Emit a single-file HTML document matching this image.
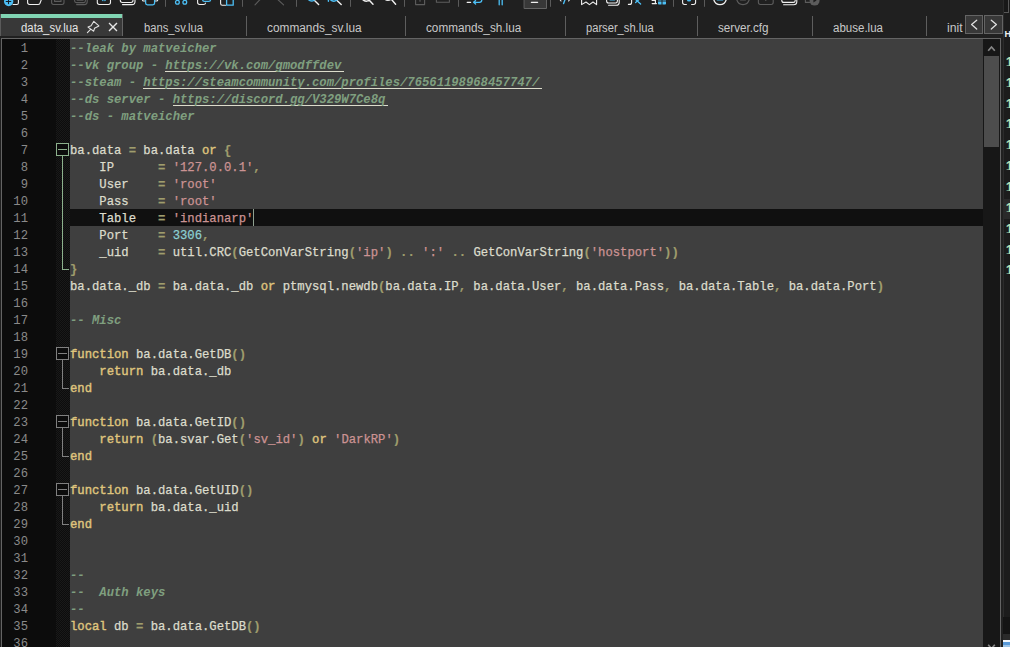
<!DOCTYPE html>
<html lang="en">
<head>
<meta charset="utf-8">
<title>data_sv.lua - Notepad++</title>
<style>
*{box-sizing:border-box}
html,body{margin:0;padding:0}
body{width:1010px;height:647px;overflow:hidden;background:#202020;position:relative;font-family:"Liberation Sans",sans-serif}
.abs{position:absolute}
#toolbar{position:absolute;left:0;top:0;width:1010px;height:14px;background:#202020;overflow:hidden}
#tabs{position:absolute;left:0;top:14px;width:1003px;height:24px;background:#202020;overflow:hidden}
.tl{position:absolute;top:7px;height:14px;color:#c8c8c8;font-size:12.3px;line-height:14px;white-space:nowrap;transform-origin:0 0}
.tl.on{color:#e4e4e4}
#atab{position:absolute;left:1px;top:0;width:121px;height:22px;background:#383838}
#atab:before{content:"";position:absolute;left:0;top:0;width:121px;height:4px;background:#80d4b2}
#atab:after{content:"";position:absolute;left:121px;top:0;width:1px;height:22px;background:#646464}
.sep{position:absolute;top:2px;width:1px;height:20px;background:#5e5e5e}
.ico{position:absolute;overflow:visible}
#editor{position:absolute;left:1px;top:38px;width:1000px;height:609px;border:1px solid #646464;border-bottom:0;background:#3f3f3f;overflow:hidden}
#lnm{position:absolute;left:0;top:0;width:54px;height:609px;background:#0c0c0c}
#fold{position:absolute;left:54px;top:0;width:14px;height:609px;background-color:#0c0c0c;background-image:conic-gradient(#191919 25%,#0c0c0c 0 50%,#191919 0 75%,#0c0c0c 0);background-size:2px 2px}
#code{position:absolute;left:68px;top:0;width:913px;height:609px;background:#3f3f3f}
.ln,.cl{position:absolute;height:17px;line-height:17px;font-family:"Liberation Mono","DejaVu Sans Mono",monospace;font-size:12.222px;white-space:pre}
.ln{left:0;width:26px;text-align:right;color:#8a8a8a;font-size:12.2px}
.cl{left:0;color:#dcdccc;-webkit-text-stroke:0.25px}
.cl .c{-webkit-text-stroke:0}
.cl .k{-webkit-text-stroke:0.42px}
.cl .o{-webkit-text-stroke:0.2px}
.cur{position:absolute;left:0;width:913px;height:17px;background:#101010}
.fg{color:#808080}
.fg.hl{color:#8cb08c}
.fb{position:absolute;left:0;width:13px;height:13px;border:1px solid currentColor;background:#0c0c0c}
.fb:after{content:"";position:absolute;left:1px;top:5px;width:9px;height:1px;background:currentColor}
.fv{position:absolute;left:6px;width:1px;background:currentColor}
.fh{position:absolute;left:6px;width:7px;height:1px;background:currentColor}
#caret{position:absolute;width:1px;height:17px;background:#8fa08f}
.c{color:#7f9f7f;font-style:italic;font-weight:bold}
.u{background:linear-gradient(#dcdccc,#dcdccc) no-repeat 0 12px/100% 1px;padding:0 3px 2px 0;margin-right:-3px}
.k{color:#dfc47d;font-weight:normal}
.o{color:#9f9d6d;font-weight:bold}
.s{color:#cc9393}
.n{color:#8cd0d3}
#vsb{position:absolute;left:981px;top:0;width:17px;height:609px;background:#171717}
#thumb{position:absolute;left:1px;top:17px;width:15px;height:91px;background:#4d4d4d}
#right{position:absolute;left:1003px;top:0;width:7px;height:647px;background:#1c1c1c;overflow:hidden}
.r1{left:0;width:7px;height:9.2px;overflow:hidden}
.r1 .rt{position:absolute;left:2.7px;top:-3.9px;transform-origin:0 0;transform:scaleY(1.15)}
.rt{font-family:"Liberation Sans",sans-serif;font-size:13.5px;font-weight:bold;line-height:16px;color:#b4e0b4;white-space:nowrap}
.nav{position:absolute;top:1px;width:19px;height:19px;background:#383838;border:1px solid #646464}
</style>
</head>
<body>
<div id="toolbar"><svg id="tb" class="abs" style="left:0;top:0" width="1010" height="14" viewBox="0 0 1010 14" fill="none" stroke-width="1.1" stroke-linecap="round" stroke-linejoin="round">
<g stroke="#f0f0f0">
<!-- new: doc corner -->
<path d="M13 4.5 H16.8 Q18.4 4.5 18.4 2.9 V-2"/>
<!-- open folder -->
<path d="M27.6 -2 V2.6 Q27.6 4.5 29.6 4.5 H38 Q39.4 4.5 40 3.2 L42 -2"/>
<!-- close -->
<path d="M97.3 -2 V2.6 Q97.3 4.5 99.3 4.5 H108.5 Q110.5 4.5 110.5 2.6 V-2"/>
<!-- close all -->
<path d="M120.3 -2 V0.6 Q120.3 2.5 122.3 2.5 H131 Q133 2.5 133 0.6 V-2"/>
<path d="M122.5 4.6 H132 Q135 4.6 135 1.5 V-2"/>
<!-- print sides -->
<path d="M145.2 1 H143.6 Q142.4 1 142.4 -0.5 V-2 M155 1 H156.6 Q157.8 1 157.8 -0.5 V-2"/>
<!-- copy (back) -->
<path d="M197.6 -2 V2.6 Q197.6 4.5 199.6 4.5 H203.5 Q205.3 4.5 205.6 3"/>
<!-- paste left -->
<path d="M220.6 -2 V3.4 Q220.6 5.2 222.4 5.2 H225.5"/>
<!-- find handles -->
<path d="M314.5 0.5 L318.6 4.6" stroke-width="1.4"/>
<path d="M337 0.5 L341.2 4.6" stroke-width="1.4"/>
<!-- zoom in/out -->
<path d="M362 -1 Q365.5 2.6 369.3 0.2 L373 4.2" stroke-width="1.4"/>
<path d="M384 -1.6 Q387 1.6 391.3 -0.8 L395.6 4.2" stroke-width="1.4"/>
<!-- wrap dash -->
<path d="M467.2 2.3 H470.6" stroke-width="1.3"/>
<!-- indent guide dash -->
<path d="M531.4 2.3 H537.6" stroke-width="1.3"/>
<!-- lang brackets -->
<path d="M559.6 -1 L561 1 M570 -1 L568.6 1"/>
<!-- map/bookmark -->
<path d="M581.6 -2 V4.6 L586 2 L589.4 4.6 L593 2 L596.6 4.6 V-2"/>
<!-- doc list -->
<path d="M606.6 -2 V1 Q606.6 3 608.6 3 H615.6 Q617.4 3 617.4 1 V-2"/>
<path d="M608.6 5.2 H616.2 Q619.2 5.2 619.2 2.4 V-2"/>
<!-- function list f -->
<path d="M631.6 -2 V2.4 Q631.6 4.4 629.6 4.4 H628.4"/>
<!-- workspace left -->
<path d="M652.2 0.4 H654.6 M655.4 -2 V3.6 M652.2 3.6 H656.4" stroke-width="1.2"/>
<!-- monitoring brackets -->
<path d="M682.6 -2 V2.6 Q682.6 4.5 684.6 4.5 H686.4 M691.6 4.5 H693.6 Q695.6 4.5 695.6 2.6 V-2"/>
<!-- record circle -->
<path d="M713.4 -2 Q714.4 4.6 720 4.6 Q725.6 4.6 726.6 -2" stroke-width="1.3"/>
<!-- play multiple -->
<path d="M781.8 -2 V0.4 Q781.8 2.4 783.8 2.4 H793.4 Q795.2 2.4 795.2 0.4 V-2"/>
<path d="M783.6 4.8 H793.6 Q796.8 4.8 796.8 1.8 V-2"/>
</g>
<g stroke="#4cbff5">
<!-- print body -->
<path d="M145.6 -2 V3 Q145.6 4.8 147.4 4.8 H152.8 Q154.6 4.8 154.6 3 V-2" stroke-width="1.3"/>
<path d="M101.6 -1 L103 0.6 M106.2 -1 L104.8 0.6" stroke-width="1.2"/>
<!-- scissors -->
<circle cx="177.4" cy="2.2" r="1.9" stroke-width="1.3"/><circle cx="184.8" cy="2.2" r="1.9" stroke-width="1.3"/>
<!-- copy front -->
<path d="M202.6 -2 V-0.4 Q202.6 1.4 204.4 1.4 H208.8 Q210.6 1.4 210.6 -0.4 V-2" stroke-width="1.3"/>
<!-- paste right -->
<path d="M226.6 -2 V5.2 H233.2 V-2" stroke-width="1.3"/>
<!-- find lenses -->
<path d="M307.4 -1.4 Q310.8 2.6 314.2 0.2" stroke-width="1.4"/>
<path d="M328.4 -2 V1.2 M329.6 -1 Q333.2 2.6 336.8 0.2" stroke-width="1.4"/>
<!-- wrap arrow -->
<path d="M474 2.3 H479.4 Q481.8 2.3 481.8 -0.2 V-2 M475.6 0.6 L473.6 2.3 L475.6 4" stroke-width="1.3"/>
<!-- pilcrow bars -->
<path d="M499.2 -2 V4.8 M502.2 -2 V4.8" stroke-width="1.3"/>
<!-- lang slash -->
<path d="M565.6 -2 L563.6 3.6" stroke-width="1.4"/>
<!-- doc list inner -->
<path d="M610 -0.4 H614.6" stroke-width="1.6"/>
<!-- fx x -->
<path d="M634.6 -1.4 L640.6 4" stroke-width="1.3"/><path d="M640 -1.4 L635.6 2.6" stroke-width="1.3"/>
<!-- record dot -->
<path d="M717.6 -0.4 H722.4" stroke-width="2"/>
</g>
<g fill="#4cbff5" stroke="none">
<circle cx="8.65" cy="1.5" r="4.65"/>
<rect x="658" y="-2" width="8" height="6.6" rx="0.8"/>
<circle cx="689" cy="-0.6" r="2.2"/>
</g>
<g stroke="#202020" stroke-width="1.2">
<path d="M8.5 -2 V3.6" stroke="#14202a" stroke-width="1.1"/><path d="M6.2 1.5 H10.8" stroke="#14202a" stroke-width="1.1"/>
<path d="M662 -2 V4.6" stroke-width="1"/><path d="M658 1 H666" stroke-width="1"/>
</g>
<g stroke="#5c5c5c">
<!-- save -->
<path d="M51.6 -2 V2.6 Q51.6 4.5 53.6 4.5 H62 Q64 4.5 64 2.6 V-2 M54.6 -2 V1.4 H61 V-2"/>
<!-- save all -->
<path d="M74.6 -2 V0.8 Q74.6 2.6 76.4 2.6 H83.6 Q85.4 2.6 85.4 0.8 V-2 M76.6 4.6 H84.4 Q87.2 4.6 87.2 1.8 V-2 M77.2 0.2 H83"/>
<!-- undo / redo -->
<path d="M255 4.8 L259 0.6 Q261 -1.4 263 -2" />
<path d="M277.6 -0.6 L283.6 4.8"/>
<!-- sync v / h -->
<path d="M415.6 -2 V4.6 H424.6 V-2 M420 -0.6 V1.2" />
<path d="M436.4 -2 V2.2 H449.4 V-2"/>
<!-- stop -->
<path d="M736.4 -2 Q737.4 4.6 743 4.6 Q748.6 4.6 749.6 -2 M740.6 0 H745.4" stroke-width="1.2"/>
<!-- play -->
<path d="M758.4 -2 V2.6 Q758.4 4.5 760.4 4.5 H771.2 Q773.2 4.5 773.2 2.6 V-2 M765.8 -2 V0.4"/>
<!-- save macro -->
<path d="M805.4 -2 V2.4 H810.6"/>
</g>
<g fill="#5c5c5c" stroke="none"><circle cx="814.6" cy="0.6" r="5"/><path d="M813.4 -1.6 L816.6 0.4 L813.4 2.4 Z" fill="#202020"/></g>
<!-- pressed button (indent guide) -->
<rect x="524.5" y="-3" width="22" height="11.5" fill="#383838" stroke="#646464" stroke-width="1"/>
<path d="M531.4 2.3 H537.6" stroke="#f0f0f0" stroke-width="1.3"/>
<!-- separators -->
<g stroke="#5a5a5a" stroke-width="1" stroke-linecap="butt">
<path d="M165.5 -1 V6.8 M242.5 -1 V6.8 M296.5 -1 V6.8 M350.5 -1 V6.8 M404.5 -1 V6.8 M458.5 -1 V6.8 M550.5 -1 V6.8 M673.5 -1 V6.8 M704.5 -1 V6.8"/>
</g>
</svg>
</div>
<div id="tabs">
<div class="abs" style="left:0;top:0;width:1px;height:22px;background:#5a5a5a"></div>
<div id="atab"></div>
<div class="tl on" style="left:21.2px;transform:scaleX(0.9244)">data_sv.lua</div>
<div class="tl" style="left:143.5px;transform:scaleX(0.9116)">bans_sv.lua</div>
<div class="tl" style="left:267.3px;transform:scaleX(0.9633)">commands_sv.lua</div>
<div class="tl" style="left:426.4px;transform:scaleX(0.9539)">commands_sh.lua</div>
<div class="tl" style="left:586.4px;transform:scaleX(0.9072)">parser_sh.lua</div>
<div class="tl" style="left:718.0px;transform:scaleX(0.9472)">server.cfg</div>
<div class="tl" style="left:833.2px;transform:scaleX(0.9373)">abuse.lua</div>
<div class="tl" style="left:947.2px;transform:scaleX(0.9931)">init<span style="margin-left:4px">.lua</span></div>
<div class="sep" style="left:246px"></div>
<div class="sep" style="left:405px"></div>
<div class="sep" style="left:565px"></div>
<div class="sep" style="left:697px"></div>
<div class="sep" style="left:812px"></div>
<div class="sep" style="left:926px"></div>
<svg class="ico" style="left:86px;top:6px" width="14" height="14" viewBox="86 20 14 14" fill="none" stroke="#e0e0e0" stroke-width="1.1" stroke-linejoin="round" stroke-linecap="round"><path d="M93.8 21.3 L98.9 25.9 L94.5 28.3 L93.7 31.2 L88 27.1 L91.1 25.7 Z"/><path d="M90.6 29.3 L87.4 32.6"/></svg>
<svg class="ico" style="left:108px;top:8px" width="10" height="10" viewBox="108 22 10 10" fill="none" stroke="#e6e6e6" stroke-width="1.35" stroke-linecap="square"><path d="M109.5 23.5 L116.5 30.5"/><path d="M116.5 23.5 L109.5 30.5"/></svg>
<div class="abs" style="left:964px;top:0;width:39px;height:22px;background:#202020"></div><div class="nav" style="left:965px;width:18px"></div><div class="nav" style="left:984px"></div>
<svg class="ico" style="left:965px;top:1px" width="38" height="19" viewBox="965 15 38 19" fill="none" stroke="#e0e0e0" stroke-width="1.3" stroke-linecap="round" stroke-linejoin="round"><path d="M976.7 20.2 L971.6 24.6 L976.7 29"/><path d="M991.3 20.2 L996.4 24.6 L991.3 29"/></svg>
</div>
<div id="editor">
<div id="lnm">
<div class="ln" style="top:2px">1</div>
<div class="ln" style="top:19px">2</div>
<div class="ln" style="top:36px">3</div>
<div class="ln" style="top:53px">4</div>
<div class="ln" style="top:70px">5</div>
<div class="ln" style="top:87px">6</div>
<div class="ln" style="top:104px">7</div>
<div class="ln" style="top:121px">8</div>
<div class="ln" style="top:138px">9</div>
<div class="ln" style="top:155px">10</div>
<div class="ln" style="top:172px">11</div>
<div class="ln" style="top:189px">12</div>
<div class="ln" style="top:206px">13</div>
<div class="ln" style="top:223px">14</div>
<div class="ln" style="top:240px">15</div>
<div class="ln" style="top:257px">16</div>
<div class="ln" style="top:274px">17</div>
<div class="ln" style="top:291px">18</div>
<div class="ln" style="top:308px">19</div>
<div class="ln" style="top:325px">20</div>
<div class="ln" style="top:342px">21</div>
<div class="ln" style="top:359px">22</div>
<div class="ln" style="top:376px">23</div>
<div class="ln" style="top:393px">24</div>
<div class="ln" style="top:410px">25</div>
<div class="ln" style="top:427px">26</div>
<div class="ln" style="top:444px">27</div>
<div class="ln" style="top:461px">28</div>
<div class="ln" style="top:478px">29</div>
<div class="ln" style="top:495px">30</div>
<div class="ln" style="top:512px">31</div>
<div class="ln" style="top:529px">32</div>
<div class="ln" style="top:546px">33</div>
<div class="ln" style="top:563px">34</div>
<div class="ln" style="top:580px">35</div>
<div class="ln" style="top:597px">36</div>
</div>
<div id="fold"><div class="fg hl"><div class="fb" style="top:104px"></div><div class="fv" style="top:117px;height:114px"></div><div class="fh" style="top:230px"></div></div><div class="fg"><div class="fb" style="top:308px"></div><div class="fv" style="top:321px;height:29px"></div><div class="fh" style="top:349px"></div></div><div class="fg"><div class="fb" style="top:376px"></div><div class="fv" style="top:389px;height:29px"></div><div class="fh" style="top:417px"></div></div><div class="fg"><div class="fb" style="top:444px"></div><div class="fv" style="top:457px;height:29px"></div><div class="fh" style="top:485px"></div></div></div>
<div id="code">
<div class="cur" style="top:170px"></div>
<div id="caret" style="left:183px;top:170px"></div>
<div class="cl" style="top:2px"><span class="c">--leak by matveicher</span></div>
<div class="cl" style="top:19px"><span class="c">--vk group - </span><span class="c u">https://vk.com/gmodffdev</span></div>
<div class="cl" style="top:36px"><span class="c">--steam - </span><span class="c u">https://steamcommunity.com/profiles/76561198968457747/</span></div>
<div class="cl" style="top:53px"><span class="c">--ds server - </span><span class="c u">https://discord.gg/V329W7Ce8q</span></div>
<div class="cl" style="top:70px"><span class="c">--ds - matveicher</span></div>
<div class="cl" style="top:104px">ba.data <span class="o">=</span> ba.data <span class="k">or</span> <span class="o">{</span></div>
<div class="cl" style="top:121px">    IP      <span class="o">=</span> <span class="s">'127.0.0.1'</span><span class="o">,</span></div>
<div class="cl" style="top:138px">    User    <span class="o">=</span> <span class="s">'root'</span></div>
<div class="cl" style="top:155px">    Pass    <span class="o">=</span> <span class="s">'root'</span></div>
<div class="cl" style="top:172px">    Table   <span class="o">=</span> <span class="s">'indianarp'</span></div>
<div class="cl" style="top:189px">    Port    <span class="o">=</span> <span class="n">3306</span><span class="o">,</span></div>
<div class="cl" style="top:206px">    _uid    <span class="o">=</span> util.CRC<span class="o">(</span>GetConVarString<span class="o">(</span><span class="s">'ip'</span><span class="o">)</span> <span class="o">..</span> <span class="s">':'</span> <span class="o">..</span> GetConVarString<span class="o">(</span><span class="s">'hostport'</span><span class="o">))</span></div>
<div class="cl" style="top:223px"><span class="o">}</span></div>
<div class="cl" style="top:240px">ba.data._db <span class="o">=</span> ba.data._db <span class="k">or</span> ptmysql.newdb<span class="o">(</span>ba.data.IP<span class="o">,</span> ba.data.User<span class="o">,</span> ba.data.Pass<span class="o">,</span> ba.data.Table<span class="o">,</span> ba.data.Port<span class="o">)</span></div>
<div class="cl" style="top:274px"><span class="c">-- Misc</span></div>
<div class="cl" style="top:308px"><span class="k">function</span> ba.data.GetDB<span class="o">()</span></div>
<div class="cl" style="top:325px">    <span class="k">return</span> ba.data._db</div>
<div class="cl" style="top:342px"><span class="k">end</span></div>
<div class="cl" style="top:376px"><span class="k">function</span> ba.data.GetID<span class="o">()</span></div>
<div class="cl" style="top:393px">    <span class="k">return</span> <span class="o">(</span>ba.svar.Get<span class="o">(</span><span class="s">'sv_id'</span><span class="o">)</span> <span class="k">or</span> <span class="s">'DarkRP'</span><span class="o">)</span></div>
<div class="cl" style="top:410px"><span class="k">end</span></div>
<div class="cl" style="top:444px"><span class="k">function</span> ba.data.GetUID<span class="o">()</span></div>
<div class="cl" style="top:461px">    <span class="k">return</span> ba.data._uid</div>
<div class="cl" style="top:478px"><span class="k">end</span></div>
<div class="cl" style="top:529px"><span class="c">--</span></div>
<div class="cl" style="top:546px"><span class="c">--  Auth keys</span></div>
<div class="cl" style="top:563px"><span class="c">--</span></div>
<div class="cl" style="top:580px"><span class="k">local</span> db <span class="o">=</span> ba.data.GetDB<span class="o">()</span></div>
</div>
<div id="vsb"><div id="thumb"></div><svg class="ico" style="left:0;top:0" width="17" height="609" viewBox="983 39 17 609" fill="none" stroke="#868686" stroke-width="1.7" stroke-linejoin="miter"><path d="M988.2 50.8 L991.5 47 L994.8 50.8"/><path d="M988.2 644.8 L991.5 648.6 L994.8 644.8"/></svg></div>
</div>
<div id="right"><div class="abs" style="left:0;top:0;width:1px;height:647px;background:#2b2b2b"></div><div class="abs" style="left:1px;top:0;width:5px;height:13px;background:#181818;border-right:1px solid #585858;border-bottom:1px solid #585858"></div><div class="abs" style="left:0;top:199px;width:7px;height:20px;background:#2a2a2a"></div><div class="abs rt" style="left:1.4px;top:26px;font-weight:bold;color:#f0f0f0;font-size:9px">H</div><div class="abs r1" style="top:56.8px"><div class="rt">1</div></div><div class="abs r1" style="top:77.7px"><div class="rt">1</div></div><div class="abs r1" style="top:98.5px"><div class="rt">1</div></div><div class="abs r1" style="top:119.3px"><div class="rt">1</div></div><div class="abs r1" style="top:140.2px"><div class="rt">1</div></div><div class="abs r1" style="top:161.1px"><div class="rt">1</div></div><div class="abs r1" style="top:181.9px"><div class="rt">1</div></div><div class="abs r1" style="top:202.8px"><div class="rt">1</div></div><div class="abs r1" style="top:223.6px"><div class="rt">1</div></div><div class="abs r1" style="top:244.4px"><div class="rt">1</div></div><div class="abs r1" style="top:265.3px"><div class="rt">1</div></div><div class="abs" style="left:0;top:617px;width:7px;height:17px;background:#141414"></div><div class="abs" style="left:0;top:634px;width:7px;height:6px;background:#2a2a2a"></div><div class="abs" style="left:0;top:640px;width:7px;height:7px;background:linear-gradient(#f4f8fc 0 30%,#5a9ad8 30% 70%,#9cc4e8 70%)"></div></div>
</body>
</html>
